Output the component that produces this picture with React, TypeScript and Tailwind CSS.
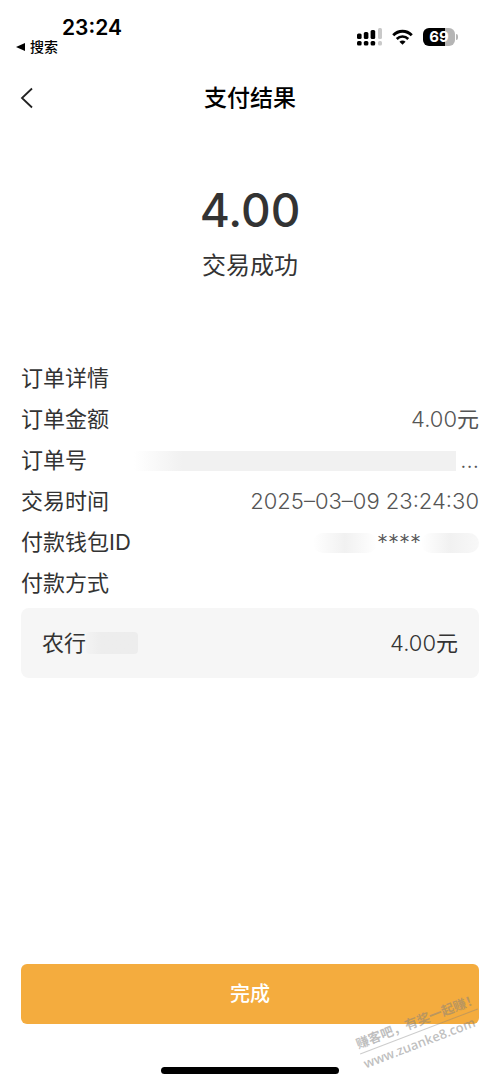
import React from 'react';

type RowProps = {
  label: string;
  children?: React.ReactNode;
};

// One line of the order details
function Row({ label, children }: RowProps) {
  return (
    <div className="flex h-[33px] items-center justify-between">
      <dt className="text-[#333]">{label}</dt>
      <dd className="flex items-center font-light text-[#555]">{children}</dd>
    </div>
  );
}

function SignalIcon() {
  return (
    <svg width="25" height="18" viewBox="0 0 25 18" aria-hidden="true">
      <g fill="#000">
        <rect x="0" y="5.5" width="4.6" height="5.5" rx="1.5" />
        <rect x="6.8" y="4" width="4.6" height="7" rx="1.5" />
        <rect x="13.6" y="2" width="4.6" height="9" rx="1.5" />
        <rect x="0" y="13" width="4.6" height="4.5" rx="1.5" />
        <rect x="6.8" y="13" width="4.6" height="4.5" rx="1.5" />
        <rect x="13.6" y="13" width="4.6" height="4.5" rx="1.5" />
      </g>
      <g fill="#c9c9c9">
        <rect x="21" y="0" width="4" height="11" rx="1.5" />
        <rect x="21" y="13" width="4" height="4.5" rx="1.5" />
      </g>
    </svg>
  );
}

function WifiIcon() {
  return (
    <svg width="21" height="17" viewBox="0 0 22 17" fill="none" stroke="#000" aria-hidden="true">
      <path d="M1.3 6.2C6.8 0.6 15.2 0.6 20.7 6.2" strokeWidth="3" />
      <path d="M5 10C8.4 6.6 13.6 6.6 17 10" strokeWidth="2.8" />
      <path d="M11 16.2L7.8 13C9.6 11.3 12.4 11.3 14.2 13Z" fill="#000" stroke="none" />
    </svg>
  );
}

function Battery() {
  return (
    <div className="flex items-center gap-px">
      <div className="flex h-[18px] w-8 items-center justify-center rounded-md bg-linear-to-r from-black from-69% to-[#b5b5b5] to-69% text-[15px] font-bold text-white">
        69
      </div>
      <span className="h-[6px] w-[2px] rounded-r-full bg-[#b5b5b5]" />
    </div>
  );
}

export default function App() {
  return (
    <div className="relative flex min-h-screen flex-col overflow-hidden bg-white font-['Inter','Noto_Sans_CJK_SC',sans-serif] text-[#333]">
      {/* Status bar */}
      <div className="flex items-start justify-between pt-4 pr-[42px] pl-4">
        <div>
          <div className="pl-[46px] text-[21px] leading-6 font-semibold text-black">23:24</div>
          <a href="#search" className="flex items-center gap-1 text-sm leading-[14px] font-medium text-black">
            <svg width="10" height="10" viewBox="0 0 10 10" aria-hidden="true">
              <path d="M0 5L9 1V9Z" />
            </svg>
            搜索
          </a>
        </div>
        <div className="flex items-center gap-[10px] pt-3">
          <SignalIcon />
          <WifiIcon />
          <Battery />
        </div>
      </div>

      {/* Title bar */}
      <header className="mt-5 grid h-12 grid-cols-[1fr_auto_1fr] items-center px-5">
        <button type="button" aria-label="返回" className="justify-self-start">
          <svg width="13" height="22" viewBox="0 0 13 22" fill="none" stroke="#222" strokeWidth="1.8" aria-hidden="true">
            <path d="M12 1.5L2 11L12 20.5" />
          </svg>
        </button>
        <h1 className="text-[23px] font-medium text-black">支付结果</h1>
      </header>

      <main className="flex flex-1 flex-col px-[21px]">
        <section className="pt-[60px] text-center">
          <p className="text-[46px] leading-[56px] font-medium">4.00</p>
          <p className="mt-2 text-2xl leading-10">交易成功</p>
        </section>

        <section className="mt-[76px] text-[22px] leading-[33px]">
          <dl className="flex flex-col gap-2">
            <Row label="订单详情" />
            <Row label="订单金额">
              4.00<span className="font-normal">元</span>
            </Row>
            <Row label="订单号">
              <span className="h-5 w-[322px] bg-linear-to-r from-white to-[#f1f1f1] to-15%" />
              <span className="pl-1">...</span>
            </Row>
            <Row label="交易时间">2025–03–09 23:24:30</Row>
            <Row label="付款钱包ID">
              <span className="h-5 w-16 rounded-full bg-linear-to-r from-white via-[#f1f1f1] to-white" />
              <span>****</span>
              <span className="h-5 w-[58px] rounded-full bg-linear-to-r from-white via-[#f1f1f1] to-[#f8f8f8]" />
            </Row>
            <Row label="付款方式" />
          </dl>
          <div className="mt-2 flex h-[70px] items-center justify-between rounded-lg bg-[#f6f6f6] px-[21px]">
            <span className="flex items-center">
              农行
              <span className="h-[22px] w-[52px] rounded-sm bg-linear-to-r from-[#f3f3f3] to-[#ededed] to-30%" />
            </span>
            <span className="font-light">
              4.00<span className="font-normal">元</span>
            </span>
          </div>
        </section>

        <button type="button" className="mt-auto h-[60px] rounded-md bg-[#f4ac3e] text-xl font-medium text-white">
          完成
        </button>
      </main>

      {/* Home indicator */}
      <div className="flex justify-center pt-[43px] pb-[10px]">
        <span className="h-[7px] w-[178px] rounded-full bg-black" />
      </div>

      {/* Watermark */}
      <div className="pointer-events-none absolute right-[18px] bottom-8 w-[126px] -rotate-[21deg] font-['Open_Sans','Noto_Sans_CJK_SC',sans-serif] text-[13px] leading-5 font-semibold text-[#808080]/50">
        <p className="border-b border-[#808080]/40 font-bold whitespace-nowrap">赚客吧，有奖一起赚！</p>
        <p>www.zuanke8.com</p>
      </div>
    </div>
  );
}
